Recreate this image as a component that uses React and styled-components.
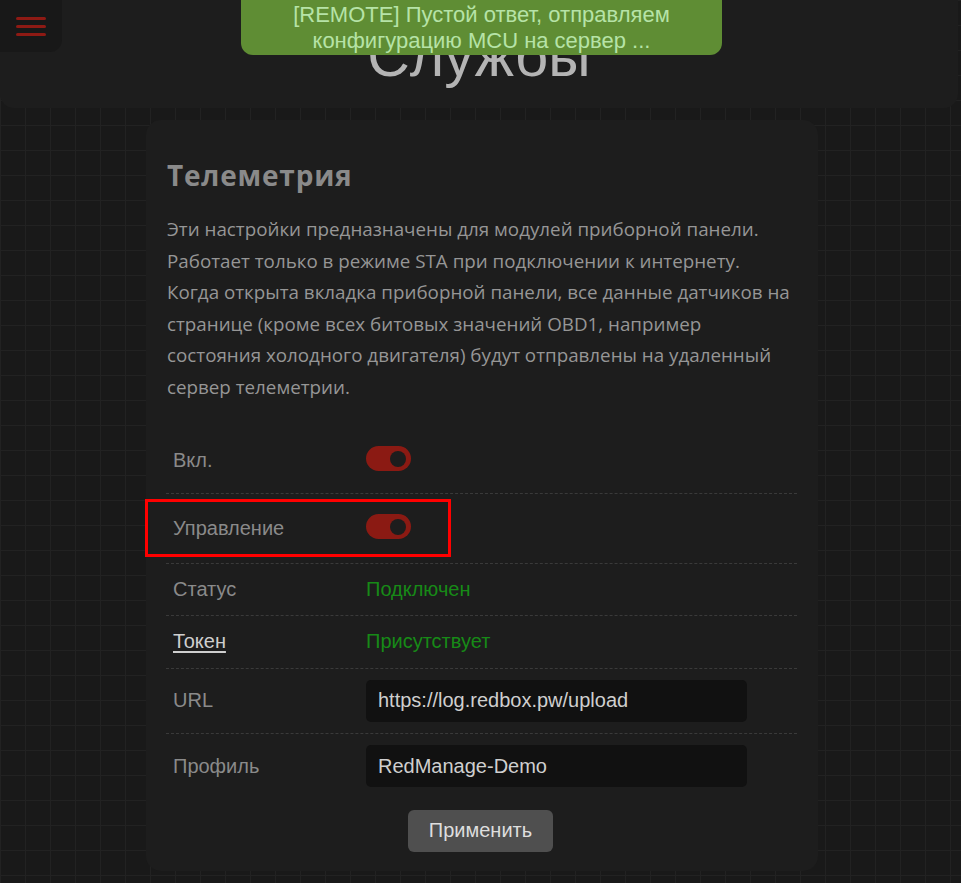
import React, { useState } from "react";
import styled, { createGlobalStyle } from "styled-components";

const GlobalStyle = createGlobalStyle`
  html, body {
    margin: 0;
    padding: 0;
  }
  body {
    min-height: 883px;
    background-color: #191919;
    background-image:
      linear-gradient(to right, #222222 1px, transparent 1px),
      linear-gradient(to bottom, #222222 1px, transparent 1px);
    background-size: 25px 25px;
    font-family: "Liberation Sans", Arial, sans-serif;
  }
`;

const Page = styled.div`
  position: relative;
  display: flex;
  flex-direction: column;
  align-items: center;
  padding-bottom: 11px;
`;

const Header = styled.header`
  align-self: stretch;
  margin-right: 3px;
  height: 108px;
  background: #1d1d1d;
  border-radius: 0 0 14px 14px;
  display: flex;
  justify-content: center;
  align-items: flex-end;
  overflow: hidden;
`;

const PageTitle = styled.h1`
  margin: 0 0 22px;
  font-family: "Liberation Sans", Arial, sans-serif;
  font-weight: normal;
  font-size: 59px;
  line-height: 1;
  color: #b4b4b4;
`;

const MenuButton = styled.button`
  position: absolute;
  top: 0;
  left: 0;
  width: 62px;
  height: 52px;
  border: none;
  padding: 0;
  background: #181818;
  border-radius: 0 0 12px 0;
  display: flex;
  flex-direction: column;
  justify-content: center;
  align-items: center;
  gap: 5px;
  cursor: pointer;
`;

const MenuLine = styled.span`
  display: block;
  width: 30px;
  height: 3px;
  border-radius: 2px;
  background: #8e1a14;
`;

const Toast = styled.div`
  position: absolute;
  top: 0;
  left: 241px;
  width: 481px;
  height: 55px;
  box-sizing: border-box;
  padding-top: 2px;
  background: #5f8d34;
  border-radius: 0 0 12px 12px;
  color: #b6e3a7;
  font-family: "Liberation Sans", Arial, sans-serif;
  font-size: 22px;
  line-height: 26px;
  text-align: center;
`;

const Card = styled.section`
  margin-top: 12px;
  margin-left: 3px;
  width: 672px;
  box-sizing: border-box;
  padding: 20px 21px 19px 20px;
  background: #1d1d1d;
  border-radius: 15px;
  display: flex;
  flex-direction: column;
`;

const CardTitle = styled.h2`
  margin: 18px 0 22px 1px;
  font-family: "Open Sans", sans-serif;
  font-weight: 700;
  font-size: 28px;
  line-height: 34px;
  letter-spacing: 0.8px;
  color: #8a8a8a;
`;

const Description = styled.p`
  margin: 0 0 30px 1px;
  font-family: "Open Sans", sans-serif;
  font-size: 18.8px;
  line-height: 31.6px;
  color: #969696;
`;

const Table = styled.div`
  display: flex;
  flex-direction: column;
`;

const Row = styled.div`
  position: relative;
  display: grid;
  grid-template-columns: 200px 1fr;
  align-items: center;
  box-sizing: border-box;
  height: ${(p) => p.$height || 53}px;
  padding-bottom: ${(p) => p.$lift || 0}px;
  border-bottom: ${(p) => (p.$last ? "none" : "1px dashed #3a3a3a")};
`;

const Label = styled.div`
  padding-left: 7px;
  font-size: 20px;
  color: #8a8a8a;
`;

const LinkLabel = styled.a`
  justify-self: start;
  margin-left: 7px;
  font-size: 20px;
  color: #cfcfcf;
  text-decoration: underline;
  text-underline-offset: 3px;
  cursor: pointer;
`;

const Value = styled.div`
  font-size: 20px;
  color: #178a17;
`;

const Toggle = styled.button`
  position: relative;
  width: 45px;
  height: 25px;
  padding: 0;
  border: none;
  border-radius: 13px;
  background: ${(p) => (p.$on ? "#8b1a13" : "#3a3a3a")};
  cursor: pointer;

  &::after {
    content: "";
    position: absolute;
    top: 5px;
    left: ${(p) => (p.$on ? "24px" : "5px")};
    width: 16px;
    height: 16px;
    border-radius: 50%;
    background: #1d1d1d;
  }
`;

const Input = styled.input`
  width: 381px;
  height: 42px;
  box-sizing: border-box;
  padding: 0 12px;
  border: none;
  border-radius: 5px;
  background: #111111;
  color: #cfcfcf;
  font-family: "Liberation Sans", Arial, sans-serif;
  font-size: 20px;
  outline: none;
`;

const Highlight = styled.div`
  position: absolute;
  left: -21px;
  top: 5px;
  width: 306px;
  height: 58px;
  box-sizing: border-box;
  border: 3px solid #ff0000;
  pointer-events: none;
`;

const Actions = styled.div`
  display: flex;
  justify-content: center;
  margin-top: 11px;
  margin-right: 2px;
`;

const ApplyButton = styled.button`
  height: 42px;
  padding: 0 21px;
  border: none;
  border-radius: 6px;
  background: #4f4f4f;
  color: #dedede;
  font-family: "Liberation Sans", Arial, sans-serif;
  font-size: 20px;
  cursor: pointer;
`;

const App = () => {
  const [enabled, setEnabled] = useState(true);
  const [control, setControl] = useState(true);
  const [url, setUrl] = useState("https://log.redbox.pw/upload");
  const [profile, setProfile] = useState("RedManage-Demo");

  return (
    <>
      <GlobalStyle />
      <Page>
        <Header>
          <PageTitle>Службы</PageTitle>
        </Header>
        <MenuButton aria-label="menu">
          <MenuLine />
          <MenuLine />
          <MenuLine />
        </MenuButton>
        <Toast>
          [REMOTE] Пустой ответ, отправляем
          <br />
          конфигурацию MCU на сервер ...
        </Toast>

        <Card>
          <CardTitle>Телеметрия</CardTitle>
          <Description>
            Эти настройки предназначены для модулей приборной панели.
            <br />
            Работает только в режиме STA при подключении к интернету.
            <br />
            Когда открыта вкладка приборной панели, все данные датчиков на
            странице (кроме всех битовых значений OBD1, например состояния
            холодного двигателя) будут отправлены на удаленный сервер
            телеметрии.
          </Description>
          <Table>
            <Row $height={60} $lift={6}>
              <Label>Вкл.</Label>
              <div>
                <Toggle $on={enabled} onClick={() => setEnabled(!enabled)} />
              </div>
            </Row>
            <Row $height={70}>
              <Label>Управление</Label>
              <div>
                <Toggle $on={control} onClick={() => setControl(!control)} />
              </div>
              <Highlight />
            </Row>
            <Row $height={52}>
              <Label>Статус</Label>
              <Value>Подключен</Value>
            </Row>
            <Row>
              <LinkLabel>Токен</LinkLabel>
              <Value>Присутствует</Value>
            </Row>
            <Row $height={65}>
              <Label>URL</Label>
              <div>
                <Input value={url} onChange={(e) => setUrl(e.target.value)} />
              </div>
            </Row>
            <Row $height={65} $last>
              <Label>Профиль</Label>
              <div>
                <Input
                  value={profile}
                  onChange={(e) => setProfile(e.target.value)}
                />
              </div>
            </Row>
          </Table>
          <Actions>
            <ApplyButton>Применить</ApplyButton>
          </Actions>
        </Card>
      </Page>
    </>
  );
};

export default App;
